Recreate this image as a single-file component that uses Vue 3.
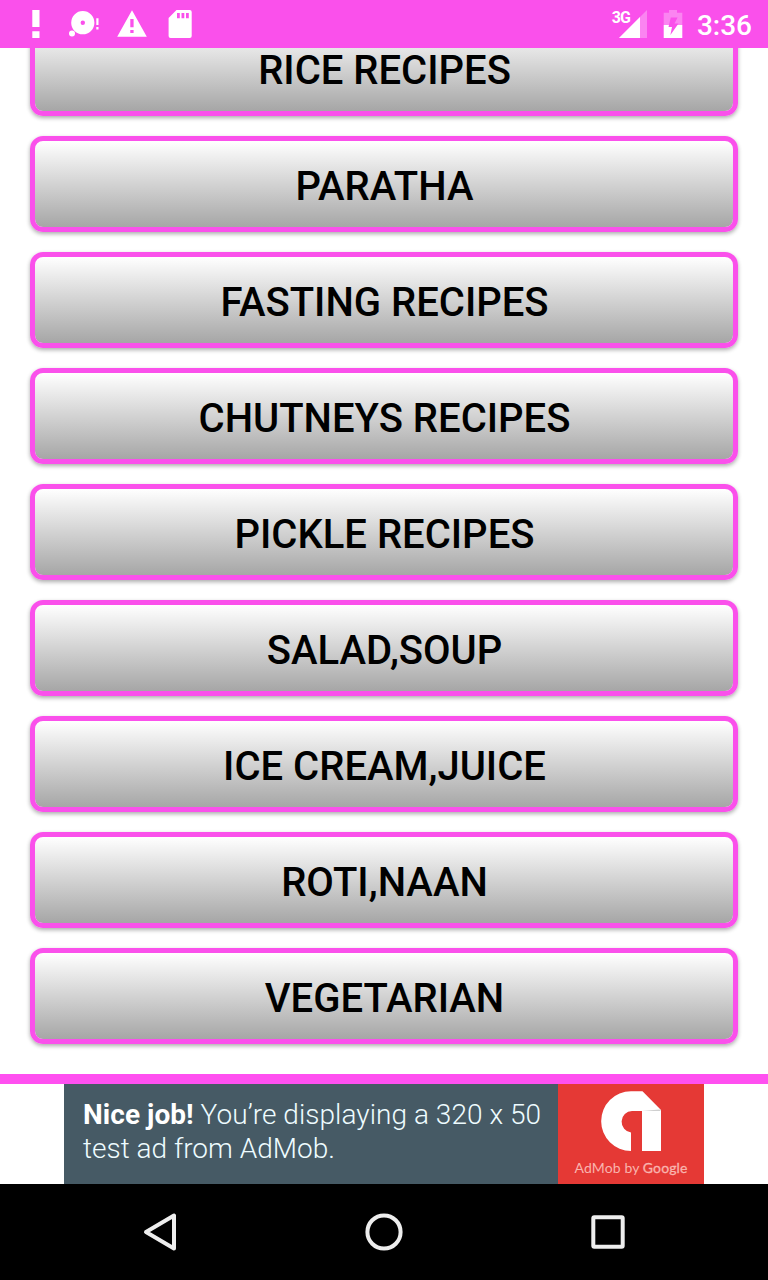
<template>
  <div class="screen">
    <header class="status-bar">
      <div class="notifications">
        <svg class="status-icon" viewBox="0 0 48 48">
          <path d="M20.3 10h7.2v17h-7.2zM20.3 31.3h7.2V38h-7.2z" fill="#fff" />
        </svg>
        <svg class="status-icon" viewBox="0 0 48 48">
          <circle cx="22.8" cy="22.7" r="6.9" fill="none" stroke="#fff" stroke-width="9.4" />
          <circle cx="12" cy="33.6" r="3" fill="#fff" />
          <path d="M36.3 18.3h2.2v6.6h-2.2zM36.3 27h2.2v2.6h-2.2z" fill="#fff" />
        </svg>
        <svg class="status-icon" viewBox="0 0 48 48">
          <path
            d="M24 10.3 38.8 36.7H9.2zM22.3 19v8.3h3.3V19zM22.3 30v3h3.3v-3z"
            fill="#fff"
            fill-rule="evenodd"
          />
        </svg>
        <svg class="status-icon" viewBox="0 0 48 48">
          <path
            d="M20.5 10h13.2a2 2 0 0 1 2 2v24a2 2 0 0 1-2 2H14.6a2 2 0 0 1-2-2V18zM21 13v5.3h2.8V13zM25.5 13v5.3h2.8V13zM30 13v5.3h2.8V13z"
            fill="#fff"
            fill-rule="evenodd"
          />
        </svg>
      </div>
      <div class="system">
        <span class="network">3G</span>
        <svg class="signal" viewBox="0 0 28 28">
          <path d="M28 0v28H0z" fill="#fff" fill-opacity=".3" />
          <path d="M21 7v21H0z" fill="#fff" />
        </svg>
        <svg class="battery" viewBox="0 0 20 28">
          <path d="M6 0h8v2.7h5.3V15H.7V2.7H6z" fill="#fff" fill-opacity=".3" />
          <path d="M.7 15h18.6v13H.7z" fill="#fff" />
          <path d="M14.6 7.500H7.800L5.500 17H9L7.400 25 15.500 13.500h-4z" fill="#fa50eb" />
        </svg>
        <span class="clock">3:36</span>
      </div>
    </header>

    <main class="list">
      <button v-for="item in categories" :key="item" class="category">{{ item }}</button>
    </main>

    <section class="ad-wrapper">
      <div class="ad">
        <div class="ad-text">
          <div class="ad-line first"><b>Nice job!</b> You’re displaying a 320 x 50</div>
          <div class="ad-line">test ad from AdMob.</div>
        </div>
        <div class="ad-brand">
          <svg class="ad-logo" viewBox="0 0 60 60">
            <path
              d="M30 .3h11.5L60 19v41H41V20H31a10.800 10.800 0 0 0-1 21.500V60A29.850 29.850 0 0 1 30 .3z"
              fill="#fff"
            />
            <path d="M41 20h19l-1.500-1.600z" fill="#cfcfcf" />
          </svg>
          <div class="ad-caption">AdMob by <span class="google">Google</span></div>
        </div>
      </div>
    </section>

    <nav class="nav-bar">
      <svg class="nav-icon" viewBox="0 0 48 48">
        <path d="M38 7.600v32.800L10 24z" />
      </svg>
      <svg class="nav-icon" viewBox="0 0 48 48">
        <circle cx="24" cy="24" r="16.600" />
      </svg>
      <svg class="nav-icon" viewBox="0 0 48 48">
        <rect x="9.300" y="9.300" width="29.400" height="29.400" rx="1" />
      </svg>
    </nav>
  </div>
</template>

<script setup>
const categories = [
  'RICE RECIPES',
  'PARATHA',
  'FASTING RECIPES',
  'CHUTNEYS RECIPES',
  'PICKLE RECIPES',
  'SALAD,SOUP',
  'ICE CREAM,JUICE',
  'ROTI,NAAN',
  'VEGETARIAN'
]
</script>

<style>
body {
  margin: 0;
  background: #fff;
}
</style>

<style scoped>
.screen {
  display: flex;
  flex-direction: column;
  width: 768px;
  height: 1280px;
  overflow: hidden;
  background: #fff;
  font-family: Roboto, sans-serif;
}

.status-bar {
  display: flex;
  justify-content: space-between;
  flex: none;
  height: 48px;
  padding: 0 16px 0 12px;
  background: #fa50eb;
  color: #fff;
}

.notifications {
  display: flex;
}

.status-icon {
  width: 48px;
  height: 48px;
}

.system {
  display: flex;
  align-items: flex-start;
}

.network {
  margin: 8px -11px 0 0;
  font-size: 16px;
  line-height: 20px;
  font-weight: 700;
  letter-spacing: -1px;
}

.signal {
  width: 28px;
  height: 28px;
  margin: 10px 16px 0 0;
}

.battery {
  width: 20px;
  height: 28px;
  margin: 10px 14px 0 0;
}

.clock {
  font-size: 28px;
  line-height: 52px;
  font-weight: 500;
}

.list {
  display: flex;
  flex-direction: column;
  justify-content: flex-end;
  gap: 20px;
  flex: none;
  box-sizing: border-box;
  height: 1026px;
  padding: 0 30px 30px;
  overflow: hidden;
}

.category {
  flex: none;
  box-sizing: border-box;
  width: 100%;
  height: 96px;
  padding: 6px 0 0 1px;
  border: 5px solid #fa50eb;
  border-radius: 13px;
  background: linear-gradient(#fff, #a6a6a6) padding-box;
  box-shadow: 0 2px 4px rgba(0, 0, 0, 0.33);
  color: #000;
  font-family: inherit;
  font-size: 40px;
  line-height: 80px;
  font-weight: 500;
}

.ad-wrapper {
  display: flex;
  justify-content: center;
  flex: none;
  border-top: 10px solid #ff50f0;
}

.ad {
  display: flex;
  width: 640px;
  height: 100px;
}

.ad-text {
  box-sizing: border-box;
  width: 494px;
  padding: 14px 0 0 19px;
  background: #465a65;
  color: #eefcff;
  font-size: 28px;
  line-height: 34px;
  font-weight: 300;
  white-space: nowrap;
}

.ad-line.first {
  letter-spacing: 0.05px;
}

.ad-text b {
  color: #fff;
  font-weight: 700;
}

.ad-brand {
  display: flex;
  flex-direction: column;
  align-items: center;
  width: 146px;
  background: #e53935;
}

.ad-logo {
  width: 60px;
  height: 60px;
  margin-top: 7px;
}

.ad-caption {
  margin-top: 8px;
  color: #f9b4ae;
  font-family: Lato, sans-serif;
  font-size: 14px;
  line-height: 18px;
  letter-spacing: 0.12px;
  white-space: nowrap;
}

.google {
  -webkit-text-stroke: 0.3px #f9b4ae;
}

.nav-bar {
  display: flex;
  justify-content: center;
  align-items: center;
  gap: 176px;
  flex: none;
  height: 96px;
  background: #000;
}

.nav-icon {
  width: 48px;
  height: 48px;
  fill: none;
  stroke: #eee;
  stroke-width: 4;
  stroke-linejoin: round;
}
</style>
